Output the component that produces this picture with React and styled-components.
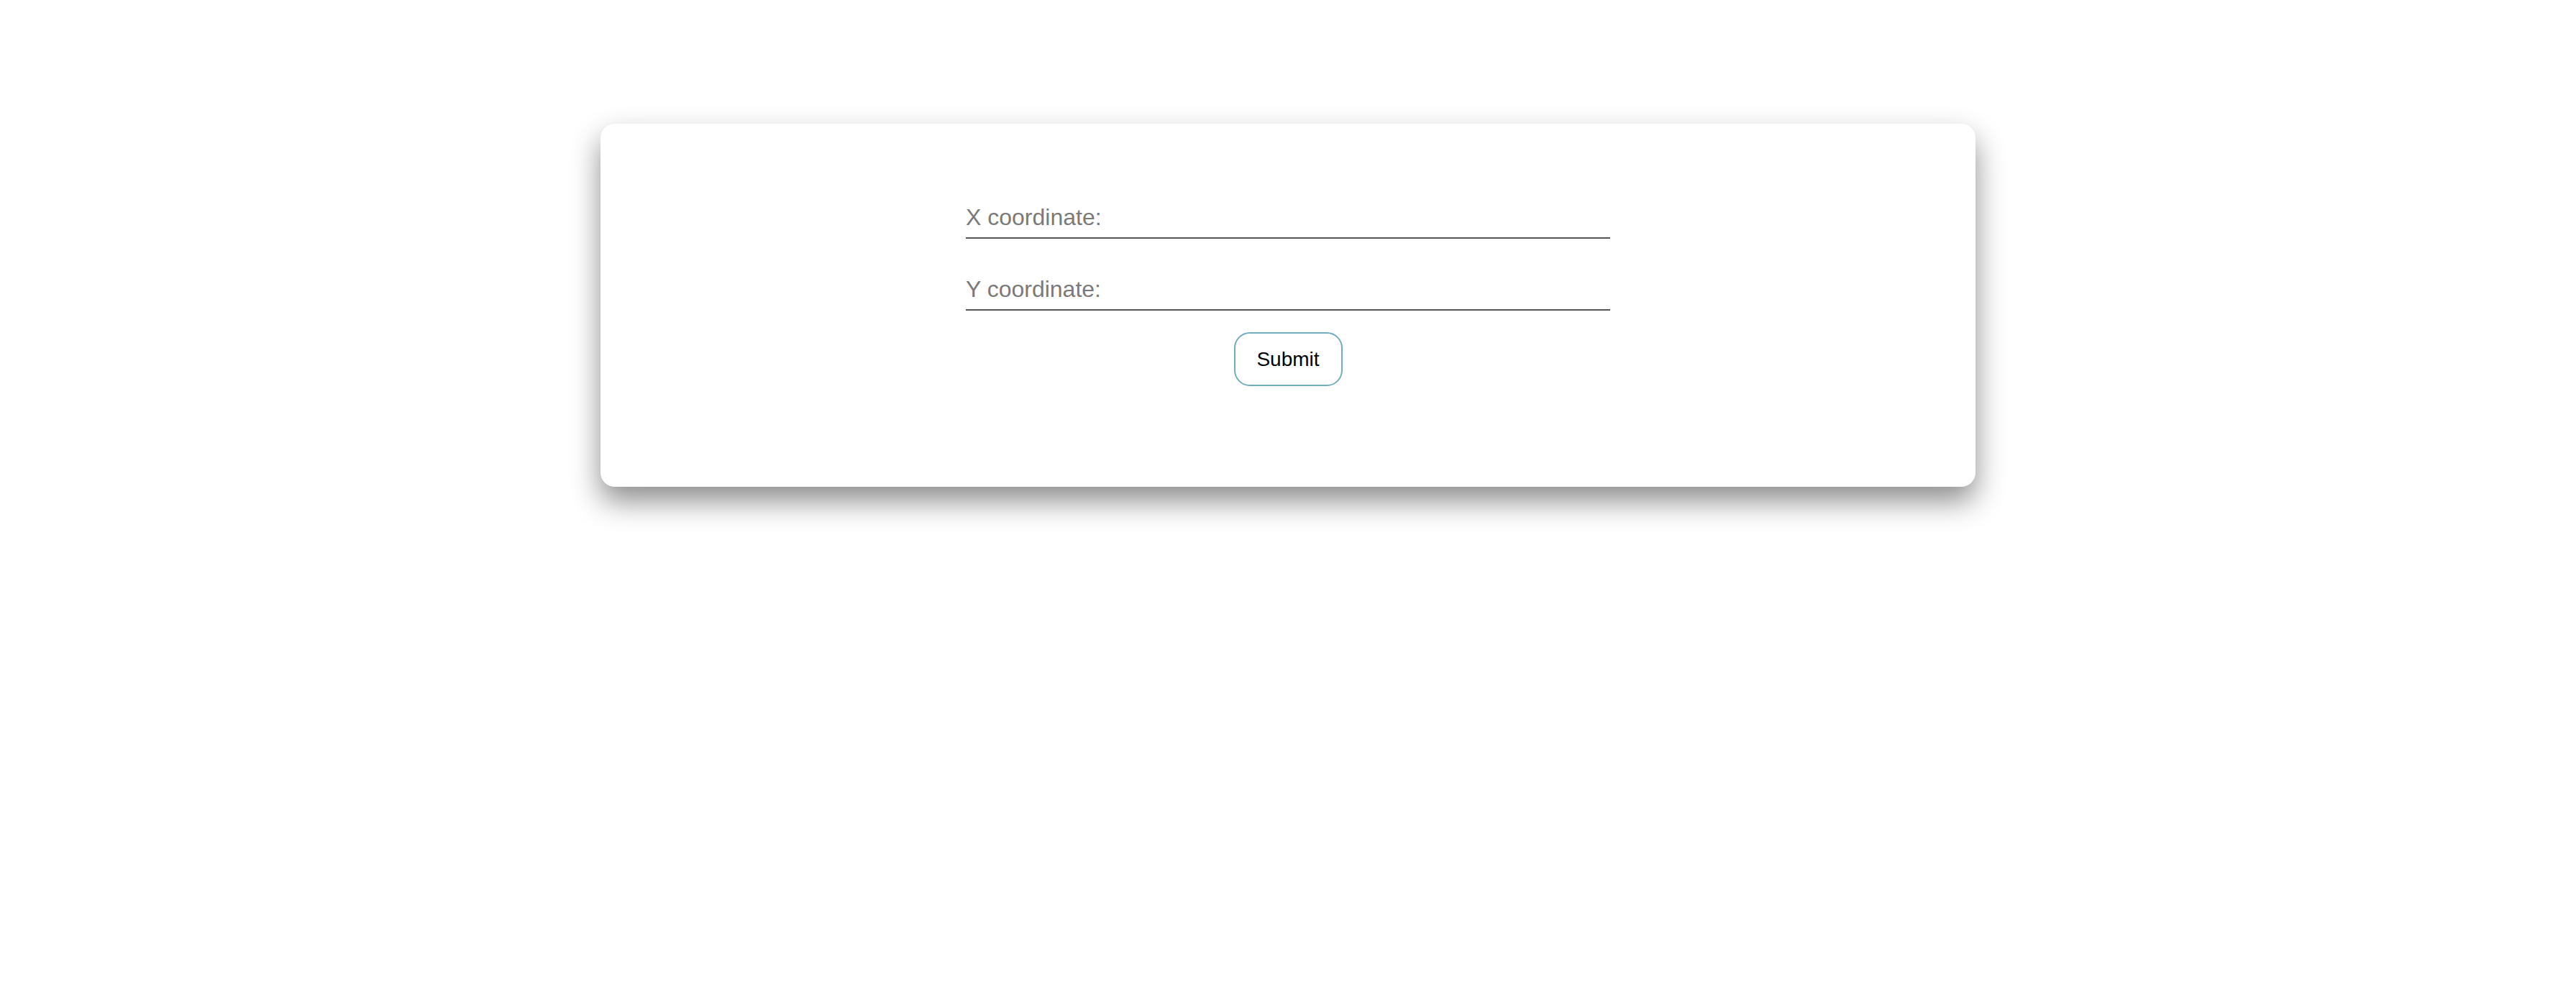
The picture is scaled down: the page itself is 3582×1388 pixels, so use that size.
import React from "react";
import styled, { createGlobalStyle } from "styled-components";

const GlobalStyle = createGlobalStyle`
  html, body {
    margin: 0;
    padding: 0;
    background: #ffffff;
  }
  body {
    font-family: "Liberation Sans", Arial, sans-serif;
  }
`;

const Page = styled.div`
  display: flex;
  justify-content: center;
  padding-top: 172px;
  min-height: 1388px;
  box-sizing: border-box;
`;

const Card = styled.div`
  width: 1912px;
  height: 505px;
  box-sizing: border-box;
  background: #ffffff;
  border-radius: 20px;
  box-shadow: 0 20px 40px rgba(0, 0, 0, 0.45);
  padding-top: 102px;
  display: flex;
  justify-content: center;
`;

const Form = styled.form`
  width: 896px;
  display: flex;
  flex-direction: column;
  align-items: center;
`;

const Field = styled.input`
  width: 100%;
  height: 58px;
  box-sizing: border-box;
  border: none;
  border-bottom: 2px solid #555555;
  outline: none;
  padding: 0;
  margin: 0 0 ${(p) => p.$gap}px 0;
  font-family: "Liberation Sans", Arial, sans-serif;
  font-size: 32px;
  color: #333;
  background: transparent;

  &::placeholder {
    color: #7a7a7a;
  }
`;

const SubmitButton = styled.button`
  width: 151px;
  height: 75px;
  box-sizing: border-box;
  border: 2px solid #72adbd;
  border-radius: 22px;
  background: #ffffff;
  color: #000000;
  font-family: "Liberation Sans", Arial, sans-serif;
  font-size: 28px;
  padding: 0;
  cursor: pointer;
`;

export default function App() {
  return (
    <>
      <GlobalStyle />
      <Page>
        <Card>
          <Form onSubmit={(e) => e.preventDefault()}>
            <Field type="text" placeholder="X coordinate:" $gap={42} />
            <Field type="text" placeholder="Y coordinate:" $gap={30} />
            <SubmitButton type="submit">Submit</SubmitButton>
          </Form>
        </Card>
      </Page>
    </>
  );
}
